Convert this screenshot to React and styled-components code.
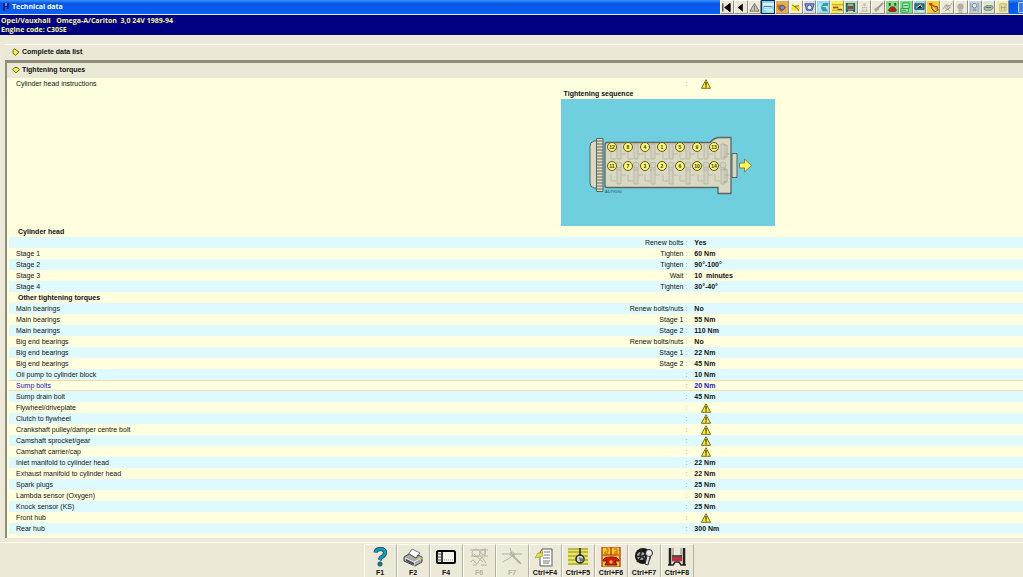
import React from "react";
import styled, { createGlobalStyle, css } from "styled-components";

const GlobalStyle = createGlobalStyle`
    * { box-sizing: border-box; }
    body {
        margin: 0;
        background: #ece9d8;
        color: #111;
        font: 7px/11px "Liberation Sans", Arial, sans-serif;
    }
`;

const Page = styled.div`
    display: flex;
    flex-direction: column;
    min-height: 100vh;
    overflow: hidden;
`;

const TitleBar = styled.header`
    display: flex;
    align-items: center;
    height: 14px;
    padding-left: 2px;
    background: linear-gradient(#3a91fa, #0855e4 25%, #0560f4);
    color: #fff;
`;

const Title = styled.h1`
    flex: 1;
    margin: 0 0 0 2px;
    font-family: "Open Sans", "Liberation Sans", sans-serif;
    font-size: 7px;
    line-height: 14px;
`;

const Toolbar = styled.div`
    display: flex;
    width: 289px;
    height: 14px;
    margin-right: 9px;
`;

const ToolButton = styled.button`
    display: flex;
    flex: 1;
    align-items: center;
    justify-content: center;
    min-width: 0;
    padding: 0;
    border: 1px solid;
    border-color: #fff #8f8d82 #8f8d82 #fff;
    background: ${({ $bg }) => $bg || "#ece9d8"};
    ${({ $active }) => $active && css`border-color: #142a55;`}
`;

const WindowButton = styled.button`
    width: 5px;
    height: 11px;
    padding: 0;
    border: 1px solid #b9d4ff;
    border-right: 0;
    border-radius: 2px 0 0 2px;
    background: #3c7cf0;
`;

const Vehicle = styled.div`
    height: 21px;
    padding: 1px;
    border-top: 1px solid #ece9d8;
    background: #000080;
    color: #f4f49a;
    font-family: "Open Sans", "Liberation Sans", sans-serif;
    font-weight: bold;
    line-height: 9px;
    white-space: pre;
`;

const Line = styled.p`
    margin: 0;
`;

const Content = styled.main`
    flex: 1;
    padding: 9px 0 0 5px;
`;

const SectionButton = styled.button`
    display: flex;
    align-items: center;
    gap: 2px;
    width: 100%;
    height: ${({ $open }) => ($open ? "15px" : "16px")};
    padding: 0 0 2px ${({ $open }) => ($open ? "5px" : "7px")};
    border: 0;
    border-top: ${({ $open }) => ($open ? "0" : "1px solid #fff")};
    background: #ebe8d6;
    color: #111;
    font: bold 7px/11px "Liberation Sans", Arial, sans-serif;
`;

const Panel = styled.section`
    padding-bottom: 4px;
    border-top: 3px solid #8f8c7c;
    border-left: 2px solid #8f8c7c;
    background: #ffffe0;
`;

const Torques = styled.table`
    width: 100%;
    padding-left: 2px;
    border-spacing: 0;
    table-layout: fixed;
`;

const Row = styled.tr`
    height: 11px;
    background: ${({ $blue }) => ($blue ? "#dffaff" : "#ffffe0")};
    color: ${({ $selected }) => ($selected ? "#1a10b8" : "inherit")};
    td, th {
        padding-top: 0;
        padding-bottom: 0;
        ${({ $selected }) => $selected && css`
            box-shadow: inset 0 1px #e8dfaa, inset 0 -1px #e8dfaa;
        `}
    }
`;

const Name = styled.th`
    width: 40%;
    padding-left: 7px;
    font-weight: normal;
    text-align: left;
`;

const Step = styled.td`
    width: 27%;
    padding-right: 1px;
    text-align: right;
`;

const Colon = styled.span`
    color: #8a8a80;
`;

const Value = styled.td`
    padding-left: 6px;
    font-weight: bold;
    white-space: pre;
    svg {
        display: block;
        margin-left: 7px;
    }
`;

const Heading = styled.th`
    padding-left: 9px;
    text-align: left;
`;

const FigureCell = styled.td`
    padding: 0;
`;

const Figure = styled.figure`
    width: 214px;
    margin: 0 0 0 54%;
    padding-left: 4px;
    box-sizing: content-box;
    svg {
        display: block;
    }
`;

const Caption = styled.figcaption`
    height: 10px;
    padding-left: 3px;
    font-weight: bold;
    line-height: 9px;
`;

const KeyBar = styled.footer`
    display: flex;
    justify-content: center;
    margin-top: 4px;
    padding: 1px 0 0 34px;
    border-top: 1px solid #fffdf2;
`;

const KeyButton = styled.button`
    display: flex;
    flex-direction: column;
    align-items: center;
    width: 33px;
    height: 34px;
    padding: 2px 0 0;
    border: 1px solid;
    border-color: #fffef6 #b5b2a3 #b5b2a3 #fffef6;
    background: #ece9d8;
    color: ${({ disabled }) => (disabled ? "#b5b2a3" : "#111")};
    font: bold 7px/9px "Liberation Sans", Arial, sans-serif;
    svg {
        margin-bottom: 1px;
    }
`;

const Warning = () => (
    <svg width="10" height="10" viewBox="0 0 10 10" role="img" aria-label="Warning">
        <path d="M5 .7 9.6 9.3H.4Z" fill="#ffee32" stroke="#4c4b18" strokeWidth=".8" strokeLinejoin="round" />
        <path d="M5 3v3.7M5 7.3v1.2" stroke="#222" strokeWidth="1.1" />
    </svg>
);

const Diamond = ({ open }) => (
    <svg width="8" height="8" viewBox="0 0 8 8">
        <path
            d={open ? "M.6 3.8 2.6 1.5h2.8l2 2.3L4 6.8Z" : "M2.4.8 7 4 3.6 7.2 1.1 5.4V2.4Z"}
            fill="#fff34a" stroke="#555018" strokeWidth=".9"
        />
    </svg>
);

const tools = [
    { name: "First", art: <path d="M2 1.5v9M10 1.5v9L4 6Z" fill="#000" stroke="#000" /> },
    { name: "Previous", art: <path d="M8.5 1.5v9L3 6Z" fill="#000" /> },
    { name: "Warnings", art: <><path d="M6 1.5 11 10H1Z" fill="#c8c5b6" stroke="#706e63" /><path d="M6 4v5" stroke="#777" /></> },
    { name: "Technical data", bg: "#8bd3e8", active: true, art: <><path d="M0 1h12v3H0Z" fill="#d8f6ff" /><path d="M1 6h7M1 8h10M3 10h8" stroke="#eaffff" /><path d="M1 5h8" stroke="#34779b" /></> },
    { name: "Service", bg: "#e8ab4c", art: <><path d="M1 3h5l5 3-5 5-4-3Z" fill="#c86030" /><circle cx="7" cy="6" r="2.5" fill="#6d94c7" stroke="#375983" /></> },
    { name: "Repair", bg: "#f7f3d2", art: <><path d="m1 7 3-4 6 1 1 4-4 2-5-1" fill="#f3df36" /><path d="m2 3 6 4M5 5l5-1M8 7l2 3" stroke="#777028" /></> },
    { name: "Belts", bg: "#d5d9e8", art: <><path d="M1 2h10L9 9H3Z" fill="#8799c8" stroke="#3c5187" /><circle cx="6" cy="6" r="2.5" fill="#e9edf6" stroke="#48669e" /></> },
    { name: "Diagnostics", bg: "#9cdeec", art: <><path d="M6 1h5v3L8 6l3 4H5L3 6Z" fill="#3999b8" /><path d="M2 2v8M5 5h5" stroke="#e5ffff" /></> },
    { name: "Wiring", bg: "#f6ee55", art: <><path d="M0 3h12M0 9h12" stroke="#a99b22" /><path d="M1 6h6" stroke="#cc3f22" strokeWidth="2" /><path d="M6 8h5" stroke="#333" /></> },
    { name: "Lift", bg: "#bfddc6", art: <><path d="M2 1v10M10 1v10" stroke="#15714c" strokeWidth="2" /><path d="M3 4h6v4H3Z" fill="#834a40" /><path d="M2 2h8M2 9h8" stroke="#273e36" /></> },
    { name: "Airbag", art: <><circle cx="6" cy="3" r="1.6" fill="#c4c1b4" /><path d="M3 6h6M2 10h8M4 7v3M8 7v3" stroke="#bcb9aa" /></> },
    { name: "Brush", art: <><path d="m11 1-6 6" stroke="#99978b" strokeWidth="2" /><path d="m5 5 2 3-4 3-2-3Z" fill="#aaa797" /></> },
    { name: "Faults", bg: "#87dc83", art: <><path d="M3 1v3M9 1v3" stroke="#22572a" strokeWidth="2" /><path d="M1 9 4 5h4l3 4-2 2H3Z" fill="#9c2924" /></> },
    { name: "Documents", bg: "#72e482", art: <><path d="M3 1h7v6H3ZM1 7h8v4H1Z" fill="#b9f4c2" stroke="#209b44" /><path d="M4 4h5M2 9h5" stroke="#148345" /></> },
    { name: "Monitor", bg: "#a5d9d3", art: <><path d="M1 2h10v6H1Z" fill="#268292" stroke="#244854" /><path d="m2 7 5-4 2 3M4 10h6" stroke="#effff8" /></> },
    { name: "Keys", bg: "#f5d12e", art: <><path d="M1 1h4v3H2Z" fill="#df3824" /><path d="m4 4 6 1 1 4-4 2-3-4Z" fill="#e78e2c" stroke="#6b4820" /><path d="m5 5 4 5" stroke="#fff38c" /></> },
    { name: "Tools", art: <><path d="m1 8 3-5 5 1 2-3M3 10l7-5M5 3l3 7" fill="none" stroke="#aaa79a" /><circle cx="6" cy="6" r="2" fill="none" stroke="#9b988b" /></> },
    { name: "Lamp", art: <><circle cx="6" cy="5" r="3.5" fill="#b5b2a3" /><path d="M4 9h4M4 11h4" stroke="#96948a" /></> },
    { name: "Climate", bg: "#c7d5da", art: <><path d="M2 1v10M10 1v10M3 5h6" stroke="#8295a4" /><circle cx="6" cy="4" r="2.5" fill="#dde8e9" stroke="#6d8795" /><path d="M4 10V7h4v3" fill="#8f9fa8" /></> },
    { name: "Vehicle", bg: "#dce5d3", art: <><path d="m1 6 3-2h6l1 2-2 3H2Z" fill="#acbfac" stroke="#6d8673" /><path d="M3 6h6" stroke="#53695b" /></> },
    { name: "Notes", bg: "#f1edac", art: <><path d="M3 2h7v8H3Z" fill="#e4e1b4" stroke="#bcb77e" /><path d="M5 4v5M8 4v5M4 6h6" stroke="#aaa779" /></> },
];

const keys = [
    { label: "F1", art: <><path d="M5.5 5.500Q6 2 10.500 2 15 2 15 5.500q0 3-4 5L9.500 13" fill="none" stroke="#163e51" strokeWidth="4" /><path d="M5.5 5.5Q6 2 10.5 2 15 2 15 5.5q0 3-4 5L9.5 13" fill="none" stroke="#159eb6" strokeWidth="2.600" /><circle cx="10" cy="17" r="2.200" fill="#137f97" stroke="#173f4e" strokeWidth=".7" /></> },
    { label: "F2", art: <><path d="m5 8 4-6 8 4-4 6Z" fill="#fff" stroke="#777" /><path d="m1 10 5-3 7 4 2-3 4 2v5l-7 4-11-5Z" fill="#aaa" stroke="#444" /><path d="m2 11 9 4 8-4M11 15v4" fill="none" stroke="#eee" /><path d="m3 12 8 4v2l-8-4Z" fill="#494949" /><path d="m16 11 2 1" stroke="#d8d14d" strokeWidth="2" /></> },
    { label: "F4", art: <><rect x="1" y="4" width="18" height="12" rx="1.5" fill="#f4f3e9" stroke="#000" strokeWidth="2" /><path d="M6 4v11" stroke="#000" strokeWidth="1.5" /><path d="M1 7h4M1 10h4M1 13h4" stroke="#555" /><path d="M8 13h9" stroke="#999" strokeDasharray="1 1" /></> },
    { label: "F6", disabled: true, art: <g fill="none" stroke="#b7b4a6"><circle cx="7" cy="6" r="4" /><circle cx="14" cy="5" r="2.5" /><path d="M1 3h18M5 7l9 8M2 15q2-4 4 0t4-1l3-4 4 6M16 1v8M2 9h17M4 18h4m4 0h6" /></g> },
    { label: "F7", disabled: true, art: <g fill="none" stroke="#b5b2a4"><path d="M0 7h20M8 1l2 6 9 10M14 7 1 15" /><path d="m10 8 8 8" strokeWidth="2" /><circle cx="10" cy="7" r="2" /></g> },
    { label: "Ctrl+F4", art: <><path d="M7 2h10v17H5V6Z" fill="#fff" stroke="#555" /><path d="M9 5h6M9 8h6M8 11h7M8 14h7M8 16h6" stroke="#777" /><path d="M7 2v4H3l-3 5 8-2Z" fill="#eee232" stroke="#9a9a31" strokeWidth=".7" /><path d="M17 5v15H7" fill="none" stroke="#aaa" /></> },
    { label: "Ctrl+F5", art: <><path d="M0 1h20v17H0Z" fill="#e9e560" /><path d="M0 2h20M0 5h20M0 9h20M0 13h20M0 17h20" stroke="#6d7330" strokeWidth=".8" /><path d="M12 1v8" stroke="#222" strokeWidth="1.500" /><circle cx="12" cy="12" r="4" fill="#d3d5c6" stroke="#222" strokeWidth="1.500" /><path d="m11 10 6 3-5 2Z" fill="#6b7478" /></> },
    { label: "Ctrl+F6", art: <><path d="M1 0h18v20H1Z" fill="#f4c929" stroke="#ae301c" strokeWidth="1.2" /><path d="M2 8h16M10 0v8" stroke="#b9251b" strokeWidth="1.2" /><path d="M5 2h2v3H4v2h3M13 2h3v5h-3m0-2h3" fill="none" stroke="#b76a1b" /><path d="M2 14q0-4 8-4t8 4h-4l2 4H4l2-4Z" fill="#d91812" stroke="#741511" /><circle cx="10" cy="15" r="1.8" fill="#f0b24a" /></> },
    { label: "Ctrl+F7", art: <><circle cx="9" cy="9" r="8" fill="#151515" /><circle cx="7" cy="9" r="4" fill="#aaa" /><path d="m1 10 5-1 2-7M3 15l5-6 6 7M9 9l7-4" fill="none" stroke="#292929" strokeWidth="1.700" /><circle cx="15" cy="6" r="3.5" fill="#eee" stroke="#222" /><path d="m13 9-2 8 3 1 2-8" fill="#ddd" stroke="#333" /></> },
    { label: "Ctrl+F8", art: <><path d="M3 1v17M17 1v17" stroke="#222" strokeWidth="2.5" /><path d="M6 1v14M14 1v14" stroke="#888" /><path d="M5 10h10v4H5Z" fill="#c22b3e" /><path d="M5 9h10M1 18h5l2-3h4l2 3h5" fill="none" stroke="#222" strokeWidth="1.5" /></> },
];

const rows = [
    ["", "Renew bolts", "Yes"],
    ["Stage 1", "Tighten", "60 Nm"],
    ["Stage 2", "Tighten", "90°-100°"],
    ["Stage 3", "Wait", "10  minutes"],
    ["Stage 4", "Tighten", "30°-40°"],
    ["Other tightening torques"],
    ["Main bearings", "Renew bolts/nuts", "No"],
    ["Main bearings", "Stage 1", "55 Nm"],
    ["Main bearings", "Stage 2", "110 Nm"],
    ["Big end bearings", "Renew bolts/nuts", "No"],
    ["Big end bearings", "Stage 1", "22 Nm"],
    ["Big end bearings", "Stage 2", "45 Nm"],
    ["Oil pump to cylinder block", "", "10 Nm"],
    ["Sump bolts", "", "20 Nm"],
    ["Sump drain bolt", "", "45 Nm"],
    ["Flywheel/driveplate", "", null],
    ["Clutch to flywheel", "", null],
    ["Crankshaft pulley/damper centre bolt", "", null],
    ["Camshaft sprocket/gear", "", null],
    ["Camshaft carrier/cap", "", null],
    ["Inlet manifold to cylinder head", "", "22 Nm"],
    ["Exhaust manifold to cylinder head", "", "22 Nm"],
    ["Spark plugs", "", "25 Nm"],
    ["Lambda sensor (Oxygen)", "", "30 Nm"],
    ["Knock sensor (KS)", "", "25 Nm"],
    ["Front hub", "", null],
    ["Rear hub", "", "300 Nm"],
];

const boltX = [51, 67, 84, 101, 119, 136, 153];
const boltRows = [
    { y: 48, order: [12, 8, 4, 1, 5, 9, 13] },
    { y: 67, order: [11, 7, 3, 2, 6, 10, 14] },
];

const HeadDiagram = () => (
    <svg width="214" height="127" viewBox="0 0 214 127" role="img" aria-label="Tightening sequence">
        <rect width="214" height="127" fill="#70cfdf" />
        <g fill="#d9d8c3" stroke="#5a6660">
            <path d="M36 42h-3q-4 1-4 5v37q0 4 4 5h3Z" />
            <path d="M46 43.5h103q4-5 10-5h11v56h-13v-6H46q-2 0-2-2v-41q0-2 2-2Z" strokeWidth="1.3" />
            <path d="M171 54.5h5v24h-5Z" />
            <path d="M35.5 39.5h6.5v53h-6.5Z" />
        </g>
        <path d="M36 42h6m-6 3h6m-6 3h6m-6 3h6m-6 3h6m-6 3h6m-6 3h6m-6 3h6m-6 3h6m-6 3h6m-6 3h6m-6 3h6m-6 3h6m-6 3h6m-6 3h6m-6 3h6m-6 3h6" stroke="#4f5850" strokeWidth=".8" />
        {[58, 75, 92, 110, 127, 145, 162].map((x) => (
            <g key={x} fill="#d2d1be" stroke="#b0af9f" strokeWidth=".7">
                <path d={`M${x - 2} 45h4v15h-4ZM${x - 2} 68h4v17h-4Z`} />
                <path d={`M${x - 8} 53v7h5m5-5h5M${x - 8} 75v7h5m5-6h5m-10-5h6`} fill="none" />
                <circle cx={x} cy="66" r="3" />
            </g>
        ))}
        <path d="M162 46h4v12h-4m0 12h4v13h-4" fill="none" stroke="#969b8b" strokeWidth=".7" />
        {boltRows.map(({ y, order }) => order.map((number, i) => (
            <g key={number}>
                <circle cx={boltX[i]} cy={y} r="4.5" fill="#fff678" stroke="#5a5821" />
                <text x={boltX[i]} y={y + 2} textAnchor="middle" fontSize="5" fontWeight="bold" fill="#39381b">{number}</text>
            </g>
        )))}
        <path d="M178.5 64h5v-4l7 6.5-7 6.5v-4h-5Z" fill="#fff466" stroke="#777a45" strokeWidth=".9" />
        <text x="44" y="94" fontSize="4" fill="#294f55">AD79590</text>
    </svg>
);

export default function App() {
    return (
        <Page>
            <GlobalStyle />
            <TitleBar>
                <svg width="8" height="10" viewBox="0 0 8 10">
                    <path d="M2 1v8M6 1v6M2 4h4" stroke="#1b2189" strokeWidth="2" />
                    <path d="M4 1v3" stroke="#b9cfff" />
                </svg>
                <Title>Technical data</Title>
                <Toolbar>
                    {tools.map(({ name, art, bg, active }) => (
                        <ToolButton key={name} aria-label={name} $bg={bg} $active={active}>
                            <svg width="11" height="11" viewBox="0 0 12 12">{art}</svg>
                        </ToolButton>
                    ))}
                </Toolbar>
                <WindowButton aria-label="Minimize" />
            </TitleBar>
            <Vehicle>
                <Line>{"Opel/Vauxhall   Omega-A/Carlton  3,0 24V 1989-94"}</Line>
                <Line>Engine code: C30SE</Line>
            </Vehicle>
            <Content>
                <SectionButton>
                    <Diamond />
                    Complete data list
                </SectionButton>
                <Panel>
                    <SectionButton $open aria-expanded="true">
                        <Diamond open />
                        Tightening torques
                    </SectionButton>
                    <Torques>
                        <tbody>
                            <Row>
                                <Name scope="row">Cylinder head instructions</Name>
                                <Step><Colon>:</Colon></Step>
                                <Value><Warning /></Value>
                            </Row>
                            <Row>
                                <FigureCell colSpan={3}>
                                    <Figure>
                                        <Caption>Tightening sequence</Caption>
                                        <HeadDiagram />
                                    </Figure>
                                </FigureCell>
                            </Row>
                            <Row>
                                <Heading colSpan={3}>Cylinder head</Heading>
                            </Row>
                            {rows.map(([name, step, value], i) => (
                                <Row key={i} $blue={i % 2 === 0} $selected={name === "Sump bolts"}>
                                    {step === undefined ? (
                                        <Heading colSpan={3}>{name}</Heading>
                                    ) : (
                                        <>
                                            <Name scope="row">{name}</Name>
                                            <Step>{step} <Colon>:</Colon></Step>
                                            <Value>{value === null ? <Warning /> : value}</Value>
                                        </>
                                    )}
                                </Row>
                            ))}
                        </tbody>
                    </Torques>
                </Panel>
            </Content>
            <KeyBar>
                {keys.map(({ label, art, disabled }) => (
                    <KeyButton key={label} disabled={disabled}>
                        <svg width="20" height="20" viewBox="0 0 20 20">{art}</svg>
                        {label}
                    </KeyButton>
                ))}
            </KeyBar>
        </Page>
    );
}
